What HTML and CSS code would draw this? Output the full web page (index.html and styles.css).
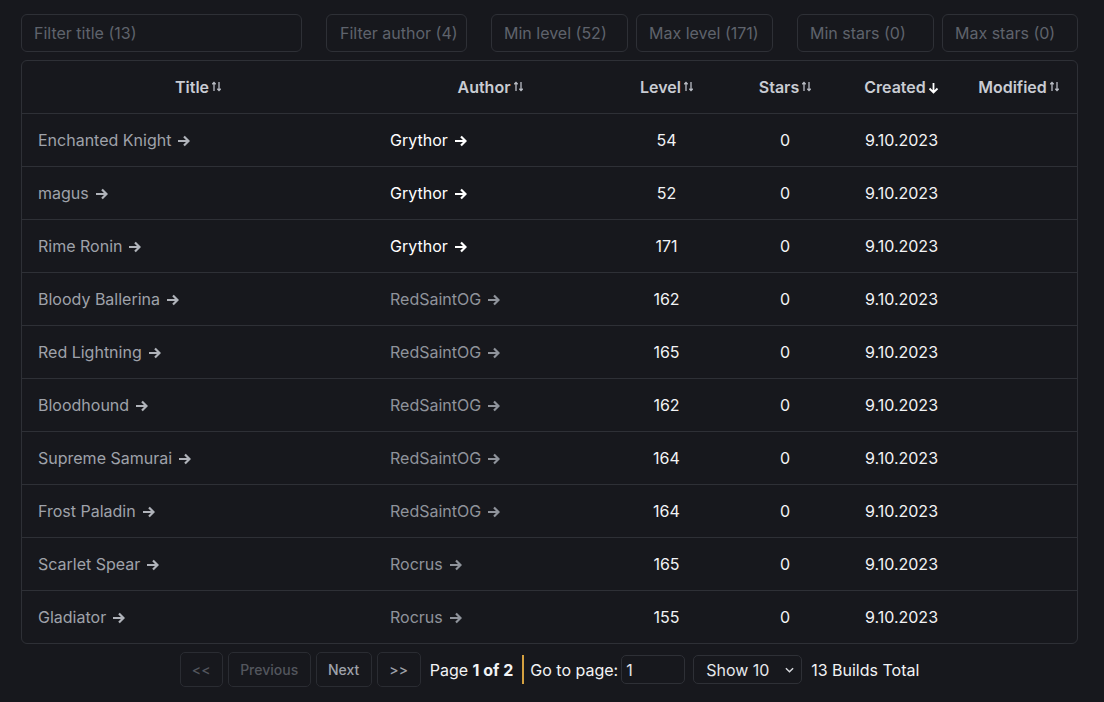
FILE: index.html
```html
<!DOCTYPE html>
<html>
<head>
<meta charset="utf-8">
<link rel="stylesheet" href="styles.css">
</head>
<body>
<div class="page">
  <div class="filters">
    <input class="f f-title" placeholder="Filter title (13)">
    <input class="f f-author" placeholder="Filter author (4)">
    <div class="pair">
      <input class="f f-num" placeholder="Min level (52)">
      <input class="f f-num" placeholder="Max level (171)">
    </div>
    <div class="pair">
      <input class="f f-num" placeholder="Min stars (0)">
      <input class="f f-num f-last" placeholder="Max stars (0)">
    </div>
  </div>

  <div class="tablewrap">
    <table>
      <colgroup>
        <col class="c-title"><col class="c-author"><col class="c-level"><col class="c-stars"><col class="c-created"><col class="c-mod">
      </colgroup>
      <thead>
        <tr>
          <th>Title<svg class="sort" viewBox="0 0 9 11"><path d="M2 10V1.5M0.3 3.2L2 1.5L3.7 3.2M7 1V9.5M5.3 7.8L7 9.5L8.7 7.8"/></svg></th>
          <th>Author<svg class="sort" viewBox="0 0 9 11"><path d="M2 10V1.5M0.3 3.2L2 1.5L3.7 3.2M7 1V9.5M5.3 7.8L7 9.5L8.7 7.8"/></svg></th>
          <th>Level<svg class="sort" viewBox="0 0 9 11"><path d="M2 10V1.5M0.3 3.2L2 1.5L3.7 3.2M7 1V9.5M5.3 7.8L7 9.5L8.7 7.8"/></svg></th>
          <th>Stars<svg class="sort" viewBox="0 0 9 11"><path d="M2 10V1.5M0.3 3.2L2 1.5L3.7 3.2M7 1V9.5M5.3 7.8L7 9.5L8.7 7.8"/></svg></th>
          <th>Created<svg class="down" viewBox="0 0 11 12"><path d="M5.5 1V10.5M1.5 6.5L5.5 10.5L9.5 6.5"/></svg></th>
          <th>Modified<svg class="sort" viewBox="0 0 9 11"><path d="M2 10V1.5M0.3 3.2L2 1.5L3.7 3.2M7 1V9.5M5.3 7.8L7 9.5L8.7 7.8"/></svg></th>
        </tr>
      </thead>
      <tbody>
        <tr><td class="t">Enchanted Knight<svg class="arr" viewBox="0 0 13 12"><path d="M1 6H11.5M7 1.5L11.5 6L7 10.5"/></svg></td><td class="a hi">Grythor<svg class="arr" viewBox="0 0 13 12"><path d="M1 6H11.5M7 1.5L11.5 6L7 10.5"/></svg></td><td class="n">54</td><td class="n">0</td><td class="n">9.10.2023</td><td></td></tr>
        <tr><td class="t">magus<svg class="arr" viewBox="0 0 13 12"><path d="M1 6H11.5M7 1.5L11.5 6L7 10.5"/></svg></td><td class="a hi">Grythor<svg class="arr" viewBox="0 0 13 12"><path d="M1 6H11.5M7 1.5L11.5 6L7 10.5"/></svg></td><td class="n">52</td><td class="n">0</td><td class="n">9.10.2023</td><td></td></tr>
        <tr><td class="t">Rime Ronin<svg class="arr" viewBox="0 0 13 12"><path d="M1 6H11.5M7 1.5L11.5 6L7 10.5"/></svg></td><td class="a hi">Grythor<svg class="arr" viewBox="0 0 13 12"><path d="M1 6H11.5M7 1.5L11.5 6L7 10.5"/></svg></td><td class="n">171</td><td class="n">0</td><td class="n">9.10.2023</td><td></td></tr>
        <tr><td class="t">Bloody Ballerina<svg class="arr" viewBox="0 0 13 12"><path d="M1 6H11.5M7 1.5L11.5 6L7 10.5"/></svg></td><td class="a">RedSaintOG<svg class="arr" viewBox="0 0 13 12"><path d="M1 6H11.5M7 1.5L11.5 6L7 10.5"/></svg></td><td class="n">162</td><td class="n">0</td><td class="n">9.10.2023</td><td></td></tr>
        <tr><td class="t">Red Lightning<svg class="arr" viewBox="0 0 13 12"><path d="M1 6H11.5M7 1.5L11.5 6L7 10.5"/></svg></td><td class="a">RedSaintOG<svg class="arr" viewBox="0 0 13 12"><path d="M1 6H11.5M7 1.5L11.5 6L7 10.5"/></svg></td><td class="n">165</td><td class="n">0</td><td class="n">9.10.2023</td><td></td></tr>
        <tr><td class="t">Bloodhound<svg class="arr" viewBox="0 0 13 12"><path d="M1 6H11.5M7 1.5L11.5 6L7 10.5"/></svg></td><td class="a">RedSaintOG<svg class="arr" viewBox="0 0 13 12"><path d="M1 6H11.5M7 1.5L11.5 6L7 10.5"/></svg></td><td class="n">162</td><td class="n">0</td><td class="n">9.10.2023</td><td></td></tr>
        <tr><td class="t">Supreme Samurai<svg class="arr" viewBox="0 0 13 12"><path d="M1 6H11.5M7 1.5L11.5 6L7 10.5"/></svg></td><td class="a">RedSaintOG<svg class="arr" viewBox="0 0 13 12"><path d="M1 6H11.5M7 1.5L11.5 6L7 10.5"/></svg></td><td class="n">164</td><td class="n">0</td><td class="n">9.10.2023</td><td></td></tr>
        <tr><td class="t">Frost Paladin<svg class="arr" viewBox="0 0 13 12"><path d="M1 6H11.5M7 1.5L11.5 6L7 10.5"/></svg></td><td class="a">RedSaintOG<svg class="arr" viewBox="0 0 13 12"><path d="M1 6H11.5M7 1.5L11.5 6L7 10.5"/></svg></td><td class="n">164</td><td class="n">0</td><td class="n">9.10.2023</td><td></td></tr>
        <tr><td class="t">Scarlet Spear<svg class="arr" viewBox="0 0 13 12"><path d="M1 6H11.5M7 1.5L11.5 6L7 10.5"/></svg></td><td class="a">Rocrus<svg class="arr" viewBox="0 0 13 12"><path d="M1 6H11.5M7 1.5L11.5 6L7 10.5"/></svg></td><td class="n">165</td><td class="n">0</td><td class="n">9.10.2023</td><td></td></tr>
        <tr><td class="t">Gladiator<svg class="arr" viewBox="0 0 13 12"><path d="M1 6H11.5M7 1.5L11.5 6L7 10.5"/></svg></td><td class="a">Rocrus<svg class="arr" viewBox="0 0 13 12"><path d="M1 6H11.5M7 1.5L11.5 6L7 10.5"/></svg></td><td class="n">155</td><td class="n">0</td><td class="n">9.10.2023</td><td></td></tr>
      </tbody>
    </table>
  </div>

  <div class="pager">
    <button class="btn b-first" disabled>&lt;&lt;</button>
    <button class="btn b-prev" disabled>Previous</button>
    <button class="btn b-next">Next</button>
    <button class="btn b-last">&gt;&gt;</button>
    <span class="pinfo">Page <strong>1 of 2</strong></span>
    <span class="goto">Go to page: <input class="pnum" value="1"></span>
    <div class="sel">Show 10<svg viewBox="0 0 10 6"><path d="M1 1L5 5L9 1"/></svg></div>
    <span class="total">13 Builds Total</span>
  </div>
</div>
</body>
</html>
```

FILE: styles.css
```css
* { box-sizing: border-box; }
html, body {
  margin: 0;
  background: #17181d;
  font-family: Inter, "Noto Sans", sans-serif;
  color: #e5e7eb;
}
.page {
  padding: 14px 26px 0 21px;
}
.filters {
  display: flex;
  gap: 24px;
  height: 38px;
}
.pair {
  display: flex;
  gap: 8px;
}
.f {
  height: 38px;
  background: #17181d;
  border: 1px solid #2e3036;
  border-radius: 6px;
  padding: 0 6px 0 12px;
  font-family: Inter, sans-serif;
  font-size: 16px;
  color: #e5e7eb;
  outline: none;
}
.f::placeholder { color: #5f636c; }
.f-title { width: 281px; }
.f-author { width: 141px; padding-left: 13px; }
.f-num { width: 137px; }
.f-last { width: 136px; }

.tablewrap {
  margin-top: 8px;
  border: 1px solid #2e3036;
  border-radius: 6px;
  overflow: hidden;
}
table {
  width: 100%;
  border-collapse: collapse;
  table-layout: fixed;
}
.c-title { width: 352px; }
.c-author { width: 232px; }
.c-level { width: 121px; }
.c-stars { width: 116px; }
.c-created { width: 117px; }
.c-mod { width: auto; }
th {
  height: 52px;
  font-weight: 600;
  font-size: 16px;
  color: #c9ccd3;
  text-align: center;
  padding: 0;
}
td {
  height: 53px;
  border-top: 1px solid #2e3036;
  font-size: 16px;
  padding: 0 16px;
  white-space: nowrap;
}
.sort {
  width: 9px;
  height: 11px;
  margin-left: 3px;
  vertical-align: 1px;
  fill: none;
  stroke: #b9bcc4;
  stroke-width: 1.3;
}
.down {
  width: 11px;
  height: 12px;
  margin-left: 2px;
  vertical-align: -1px;
  fill: none;
  stroke: #ffffff;
  stroke-width: 1.8;
}
.t { color: #9fa2aa; }
.a { color: #8f939b; }
.a.hi { color: #ffffff; }
.n { text-align: center; color: #f2f3f5; }
.arr {
  width: 13px;
  height: 12px;
  margin-left: 6px;
  vertical-align: -1px;
  fill: none;
  stroke: currentColor;
  stroke-width: 2.2;
}
.t .arr { stroke: #b0b3ba; }

.pager {
  display: flex;
  justify-content: center;
  align-items: center;
  gap: 5px;
  margin-top: 8px;
  padding-left: 0;
}
.btn {
  height: 35px;
  background: #17181d;
  border: 1px solid #2a2c32;
  border-radius: 5px;
  font-family: Inter, sans-serif;
  font-size: 14px;
  font-weight: 500;
  color: #9fa2aa;
  padding: 0 12px;
}
.btn:disabled { color: #53565d; }
.b-first { width: 43px; padding: 0; }
.b-prev { width: 83px; padding: 0; }
.b-next { width: 56px; padding: 0; }
.b-last { width: 44px; padding: 0; }
.pinfo {
  margin-left: 4px;
  font-size: 16px;
  color: #f2f3f5;
}
.pinfo strong { font-weight: 700; }
.goto {
  display: flex;
  align-items: center;
  font-size: 16px;
  color: #f2f3f5;
  margin-left: 4px;
  padding-left: 6px;
  border-left: 2px solid #d4a040;
  line-height: 18px;
}
.pnum {
  width: 64px;
  height: 29px;
  margin-left: 3px;
  background: #17181d;
  border: 1px solid #2e3036;
  border-radius: 5px;
  font-family: Inter, sans-serif;
  font-size: 16px;
  color: #e5e7eb;
  padding: 0 4px;
}
.sel {
  display: flex;
  align-items: center;
  justify-content: space-between;
  width: 109px;
  height: 29px;
  margin-left: 3px;
  border: 1px solid #2e3036;
  border-radius: 5px;
  padding: 0 7px 0 12px;
  font-size: 16px;
  color: #e5e7eb;
}
.sel svg {
  width: 9px;
  height: 6px;
  fill: none;
  stroke: #d8dade;
  stroke-width: 1.6;
}
.total {
  margin-left: 4px;
  font-size: 16px;
  color: #f2f3f5;
}
```
